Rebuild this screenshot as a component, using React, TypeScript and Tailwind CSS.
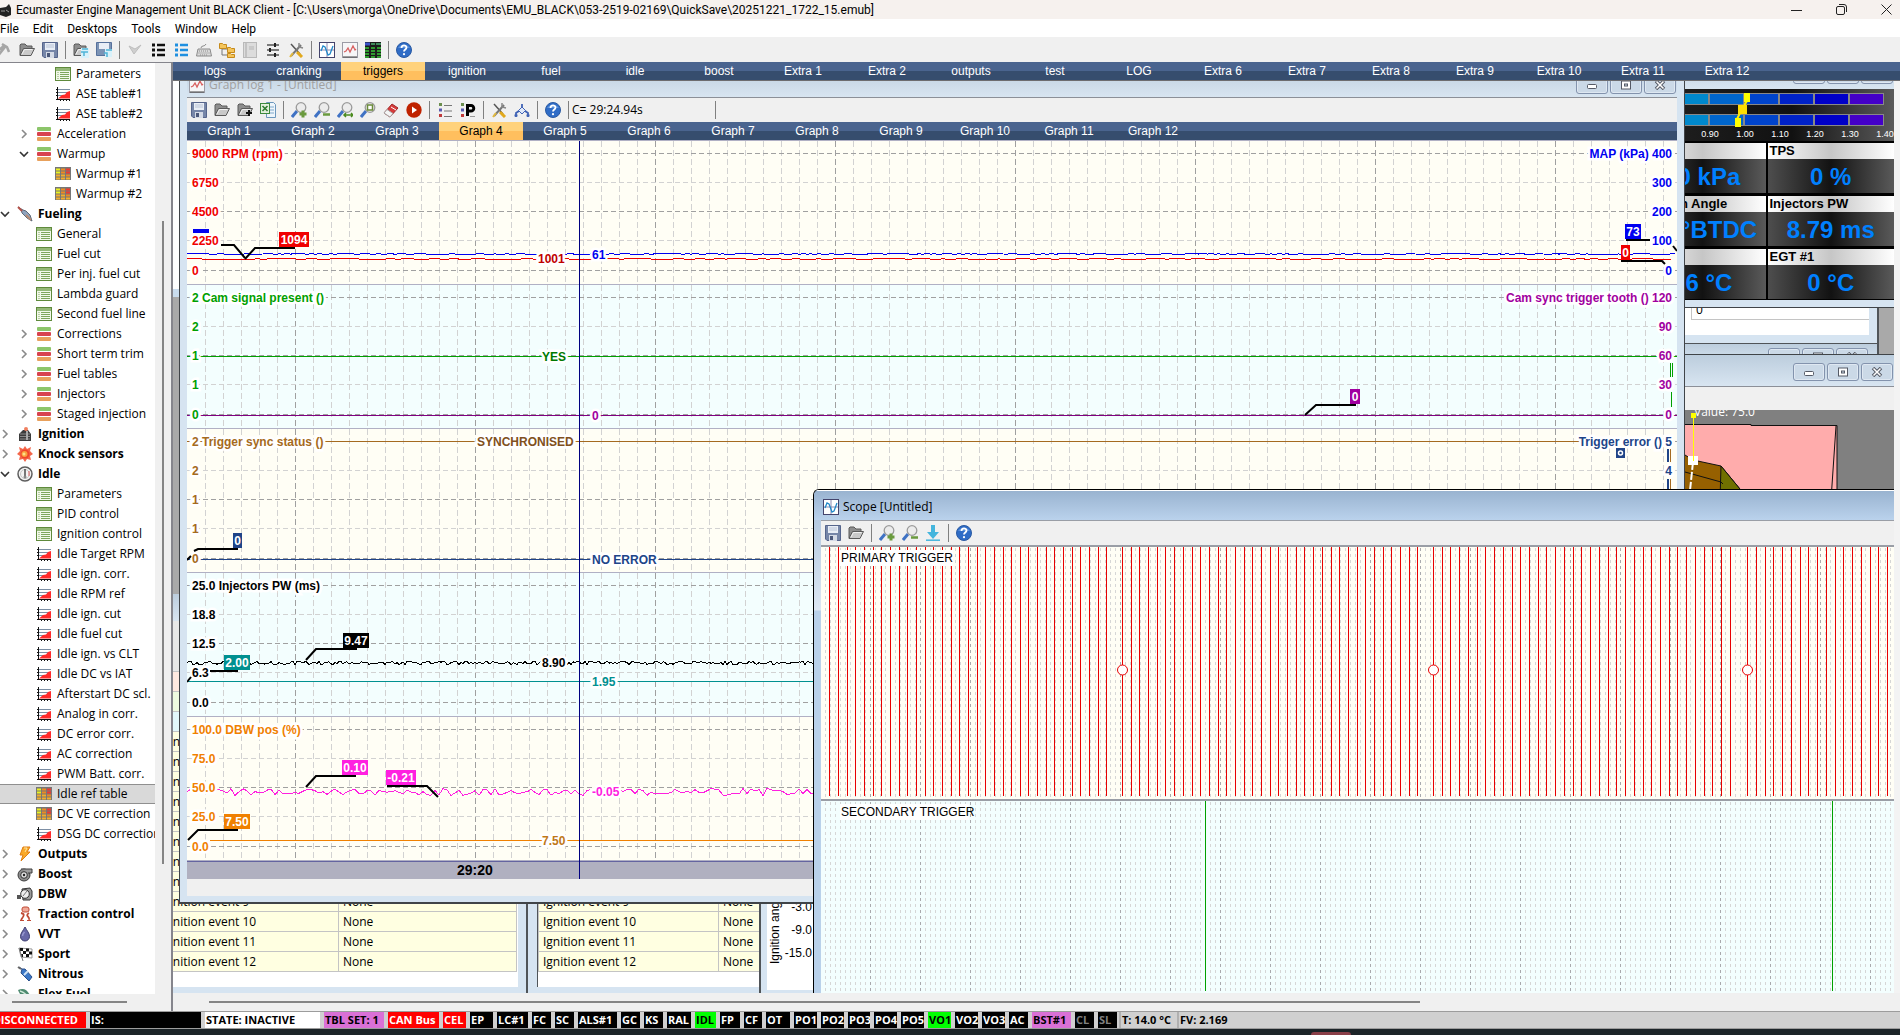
import { useState, type ReactNode } from 'react';

/* ------------------------------------------------------------------ */
/* Icons                                                               */
/* ------------------------------------------------------------------ */

function Svg({ children, size = 16 }: { children: ReactNode; size?: number }) {
  return (
    <svg width={size} height={size} viewBox="0 0 16 16" fill="none" className="shrink-0" aria-hidden="true">
      {children}
    </svg>
  );
}

const SaveIcon = () => (
  <Svg>
    <path d="M0.5 0.5h15v15H2L0.5 14z" fill="#7686a8" stroke="#56658c" />
    <rect x="3" y="1" width="10" height="7" fill="#e9eef6" />
    <path d="M4 3h8M4 5h8" stroke="#b9c3d6" />
    <rect x="4" y="10" width="8" height="6" fill="#d5dbe6" />
    <rect x="5" y="11" width="3" height="4" fill="#4b587a" />
  </Svg>
);

const FolderBase = () => (
  <>
    <path d="M1 13V3l1-1h4l2 2h5v3" fill="#8e8e8e" stroke="#5a5a5a" />
    <path d="M1 13.500L4.500 6.500h11L12 13.500z" fill="#c9c9c9" stroke="#5a5a5a" />
    <path d="M3 12L5.500 7.500h8" stroke="#f1f1f1" />
  </>
);

const OpenIcon = () => (
  <Svg>
    <FolderBase />
  </Svg>
);

const OpenAddIcon = () => (
  <Svg>
    <FolderBase />
    <path d="M12 8v6M9 11h6" stroke="#111" strokeWidth="2" />
  </Svg>
);

const OpenDesktopIcon = () => (
  <Svg>
    <FolderBase />
    <path d="M8 6h8v10H8z" fill="#d8f1fa" />
    <path d="M9 7h6M8 10h3v4M11 10h4" stroke="#4fb4d8" strokeWidth="1.500" />
  </Svg>
);

const SaveDesktopIcon = () => (
  <Svg>
    <path d="M0.500 0.500h15v13H0.500z" fill="#7c93b5" stroke="#56719c" />
    <rect x="3" y="1" width="10" height="6" fill="#e9eef6" />
    <path d="M9 7h7v8H9z" fill="#d8f1fa" />
    <path d="M10 8h6M8 11h3v4" stroke="#4fb4d8" strokeWidth="1.500" />
  </Svg>
);

const WandIcon = () => (
  <Svg>
    <path d="M1 15L9 5M6 2l5 3 2 5M3 8l6-5" stroke="#a6a6a6" strokeWidth="2.500" />
  </Svg>
);

const CheckIcon = () => (
  <Svg>
    <path d="M2 4l5 8 7-9-6 4z" fill="#cfcfcf" stroke="#bdbdbd" />
  </Svg>
);

const BulletsIcon = ({ color }: { color: string }) => (
  <Svg>
    <path d="M2 3h3M2 8h3M2 13h3" stroke={color} strokeWidth="3" />
    <path d="M7 3h8M7 8h8M7 13h8" stroke={color} strokeWidth="2.500" />
  </Svg>
);

const KeyboardIcon = () => (
  <Svg>
    <path d="M5 6c0-3 4-1 5-4" stroke="#888" />
    <path d="M2 7h12l1.500 7h-15z" fill="#dadada" stroke="#8a8a8a" />
    <path d="M3 9h10M2.500 11h11M4 13h8" stroke="#8a8a8a" strokeDasharray="1 1" />
  </Svg>
);

const TreeIcon = () => (
  <Svg>
    <path d="M3 5v8h6M3 7h6" stroke="#777" />
    <path d="M0.500 1.500h3l1 1h3v4h-7zM8.500 5.500h3l1 1h3v4h-7zM8.500 11.500h3l1 1h3v3h-7z" fill="#f5c55a" stroke="#c58a1c" />
  </Svg>
);

const BookIcon = () => (
  <Svg>
    <rect x="1.500" y="0.500" width="13" height="15" fill="#dcdcdc" stroke="#b9b9b9" />
    <path d="M4 1v14" stroke="#c2c2c2" strokeWidth="2" />
    <path d="M7 5h5M7 7h5" stroke="#b5b5b5" />
  </Svg>
);

const SlidersIcon = () => (
  <Svg>
    <path d="M2 3h12M2 8h12M2 13h12" stroke="#555" strokeWidth="1.500" />
    <path d="M10 1v4M5 6v4M10 11v4" stroke="#222" strokeWidth="2" />
  </Svg>
);

const ToolsIcon = () => (
  <Svg>
    <path d="M3 2l9 10" stroke="#555" strokeWidth="1.500" />
    <path d="M9 10l5 5" stroke="#e2a91d" strokeWidth="3" />
    <path d="M13 3L3 14" stroke="#777" strokeWidth="2" />
    <path d="M11 1l0 4 4 1" stroke="#888" strokeWidth="1.500" />
    <path d="M5 11l-3 4" stroke="#e2b93d" strokeWidth="2" />
  </Svg>
);

const ScopeIcon = () => (
  <Svg>
    <rect x="0.500" y="0.500" width="15" height="15" fill="#fff" stroke="#44446c" />
    <path d="M1 8h14M8 1v14" stroke="#8a8ab0" />
    <path d="M2 9l2-5 2 1 3 8 2-1 3-8" stroke="#2389c9" strokeWidth="1.300" />
  </Svg>
);

const LogIcon = () => (
  <Svg>
    <rect x="0.500" y="0.500" width="15" height="15" fill="#f6f6f8" stroke="#9b9ba5" />
    <path d="M2 10l2-1 2-3 2 4 3-6 2 4 1-1" stroke="#d86060" strokeWidth="1.300" />
    <path d="M1 15h14" stroke="#444" />
  </Svg>
);

const TableIcon = () => (
  <Svg>
    <rect width="16" height="16" fill="#1c1c1c" />
    <path d="M0 2h5" stroke="#3b52c9" strokeWidth="3" />
    <path d="M6 2h4M11 2h5" stroke="#3f8a5a" strokeWidth="2" />
    <path d="M0 6h16M0 9h16M0 12h16M0 15h16" stroke="#2f9a2f" strokeWidth="2" strokeDasharray="4 2" />
  </Svg>
);

const HelpIcon = () => (
  <Svg>
    <circle cx="8" cy="8" r="7.500" fill="#2f6cc6" stroke="#2a5aa3" />
    <path d="M2 6a6.500 5 0 0 1 12 0" fill="#5c92dc" />
    <path d="M5.500 6c0-3.500 5-3.200 5-0.500 0 2-2.500 2-2.500 4" stroke="#fff" strokeWidth="1.800" />
    <circle cx="8" cy="12.200" r="1.100" fill="#fff" />
  </Svg>
);

const ExcelIcon = () => (
  <Svg>
    <path d="M6.500 0.500h7l2 2v13h-9z" fill="#eef5fb" stroke="#6b97bd" />
    <path d="M9 5h5M9 8h5M9 11h5" stroke="#7fa9cc" />
    <rect x="0.500" y="1.500" width="9" height="10" fill="#e3f0dd" stroke="#3d8a3d" />
    <path d="M2.500 4l5 5M7.500 4l-5 5" stroke="#2c7a2c" strokeWidth="1.500" />
  </Svg>
);

function ZoomIcon({ kind }: { kind: 'in' | 'out' | 'fit' | 'box' }) {
  return (
    <Svg>
      <path d="M1 15l5-6" stroke="#3f72c4" strokeWidth="3" />
      <circle cx="10" cy="5.500" r="4.800" fill="#ececec" stroke="#9b9b9b" strokeWidth="1.300" />
      {kind === 'in' && <path d="M12 8.500v7M8.500 12h7" stroke="#6a9a3e" strokeWidth="3" />}
      {kind === 'out' && <path d="M9 12.500h7" stroke="#6a9a3e" strokeWidth="2.500" />}
      {kind === 'fit' && <path d="M7 13h9M9 11l-2 2 2 2M14 11l2 2-2 2" stroke="#4a8a1e" strokeWidth="1.500" />}
      {kind === 'box' && <rect x="7.500" y="3" width="5" height="5" fill="#fff" stroke="#6a8a3a" strokeWidth="1.500" />}
    </Svg>
  );
}

const EraserIcon = () => (
  <Svg>
    <path d="M1 11L9 2l6 4-8 9z" fill="#d63c3c" stroke="#a02828" />
    <path d="M1 11l3-3.500 6 4L7 15z" fill="#f4f4f4" stroke="#a9a9a9" />
    <path d="M8 5l5 3" stroke="#fff" />
  </Svg>
);

const PlayIcon = () => (
  <Svg>
    <circle cx="8" cy="8" r="7.700" fill="#bf2200" />
    <path d="M6 4.500l5 3.500-5 3.500z" fill="#fff" />
  </Svg>
);

const ListIcon = () => (
  <Svg>
    <path d="M2 2.500h3" stroke="#6b8e4e" strokeWidth="3" />
    <path d="M2 8h3" stroke="#5a5ab0" strokeWidth="3" />
    <path d="M2 13.500h3" stroke="#c03a3a" strokeWidth="3" />
    <path d="M7 3.500h8M7 9h8M7 14.500h8" stroke="#777" />
  </Svg>
);

const ParamIcon = () => (
  <Svg>
    <path d="M1 2.500h3" stroke="#6b8e4e" strokeWidth="3" />
    <path d="M1 8h3" stroke="#5a5ab0" strokeWidth="3" />
    <path d="M1 13.500h3" stroke="#c03a3a" strokeWidth="3" />
    <path d="M7.500 14V3.500h3.500a2.500 2.500 0 0 1 0 5.500H8" stroke="#000" strokeWidth="3" />
    <path d="M10 14.500h5" stroke="#999" />
  </Svg>
);

const BranchIcon = () => (
  <Svg>
    <path d="M2 15v-4l3-2h6l3 2v4M8 9V2" stroke="#3f62b5" strokeWidth="1.800" />
    <path d="M8 5l3.500 3.500L8 12 4.500 8.500z" fill="#dfe9fa" stroke="#3f62b5" />
    <path d="M0.500 13.500h3M12.500 13.500h3" stroke="#3f62b5" strokeWidth="2" />
  </Svg>
);

const DownloadIcon = () => (
  <Svg>
    <path d="M6 0h4v7h4l-6 7-6-7h4z" fill="#44b5dd" />
    <path d="M1 15.200h14" stroke="#44b5dd" strokeWidth="1.500" />
  </Svg>
);

type NodeIcon =
  | 'form' | 'curve' | 'group' | 'map' | 'fuel' | 'ignition' | 'knock' | 'idle' | 'output'
  | 'boost' | 'dbw' | 'traction' | 'vvt' | 'sport' | 'nitrous' | 'flex';

function TreeGlyph({ kind }: { kind: NodeIcon }) {
  switch (kind) {
    case 'form':
      return (
        <Svg>
          <rect x="0.500" y="1.500" width="15" height="13" fill="#f2f8ea" stroke="#5f8a3c" />
          <path d="M1 3.500h14" stroke="#94b878" strokeWidth="3" />
          <path d="M2.500 6.500h1M2.500 8.500h1M2.500 10.500h1M2.500 12.500h1M5 6.500h9M5 8.500h9M5 10.500h9M5 12.500h9" stroke="#7fa65c" />
        </Svg>
      );
    case 'curve':
      return (
        <Svg>
          <path d="M3 3.500h12M3 6.500h12M3 9.500h12" stroke="#7d8fa5" />
          <path d="M3 12.500L7 9l3-0.500L12 6l3-1v7.500z" fill="#ff2a2a" />
          <path d="M2.500 1v13M1 13.500h14M1 3.500h2M1 6.500h2M1 9.500h2M5.500 13v2M8.500 13v2M11.500 13v2M14.500 13v2" stroke="#111" />
        </Svg>
      );
    case 'group':
      return (
        <Svg>
          <rect x="1" y="1" width="14" height="4" rx="1" fill="#8cc56a" />
          <rect x="1" y="6" width="14" height="4" rx="1" fill="#d8434e" />
          <rect x="1" y="11" width="14" height="4" rx="1" fill="#e8a15c" />
          <path d="M1 5.500h14M1 10.500h14" stroke="#fff" />
        </Svg>
      );
    case 'map':
      return (
        <Svg>
          <rect x="0" y="1" width="16" height="13" fill="#777" />
          <path d="M1 3.500h4M1 6.500h4" stroke="#ecf11f" strokeWidth="2" />
          <path d="M6 3.500h4M6 6.500h4M11 9.500h4" stroke="#f08a20" strokeWidth="2" />
          <path d="M11 3.500h4M11 6.500h4" stroke="#f03a30" strokeWidth="2" />
          <path d="M1 9.500h4M6 9.500h4M1 12.500h4M6 12.500h4M11 12.500h4" stroke="#f4ae2a" strokeWidth="2" />
        </Svg>
      );
    case 'fuel':
      return (
        <Svg>
          <path d="M1 1l3 2 1 4 5 5 5 3-2-6-4-4-3-1z" fill="#8fa3bd" stroke="#5c6877" />
          <path d="M1 1l4 4" stroke="#b5524a" strokeWidth="2" />
          <path d="M9 9l5 5" stroke="#b98c74" strokeWidth="2" />
        </Svg>
      );
    case 'ignition':
      return (
        <Svg>
          <path d="M2 15V8l4-4h5l3 4v7z" fill="#3c3c3c" />
          <path d="M3 8h10M3 10.500h10M3 13h10" stroke="#8a8a8a" />
          <circle cx="9" cy="3" r="2" fill="#f08060" />
          <path d="M10 5v9" stroke="#a8a8a8" strokeWidth="2" />
        </Svg>
      );
    case 'knock':
      return (
        <Svg>
          <path d="M8 0l2 3 4-2-1 4 3 3-3 2 1 4-4-1-2 3-2-3-4 1 1-4-3-2 3-3-1-4 4 2z" fill="#f4664a" />
          <circle cx="8" cy="8" r="4.500" fill="#f0442a" />
          <circle cx="7.500" cy="8" r="3" fill="#f9a03e" />
          <circle cx="7" cy="8" r="1.500" fill="#fde08a" />
        </Svg>
      );
    case 'idle':
      return (
        <Svg>
          <circle cx="8" cy="8" r="7" fill="#f3f3f3" stroke="#5e5e5e" strokeWidth="1.500" />
          <circle cx="8" cy="8" r="4.500" stroke="#c5c5c5" />
          <path d="M8 3v7" stroke="#333" strokeWidth="1.300" />
          <path d="M12 5v5" stroke="#e06060" />
          <circle cx="8" cy="11" r="1.500" fill="#888" />
        </Svg>
      );
    case 'output':
      return (
        <Svg>
          <path d="M6 1h7l-3 5h3L4 15l2-6H3z" fill="#f9a928" stroke="#e07f14" />
          <path d="M7 2h3L8 6" stroke="#fde5a0" />
        </Svg>
      );
    case 'boost':
      return (
        <Svg>
          <circle cx="7" cy="9" r="6" fill="#8c8c8c" stroke="#3c3c3c" />
          <path d="M4 3h11v4h-4" fill="#9d9d9d" stroke="#3c3c3c" />
          <circle cx="7" cy="9" r="3.300" fill="#e0e0e0" stroke="#333" />
          <circle cx="7" cy="9" r="1.200" fill="#222" />
        </Svg>
      );
    case 'dbw':
      return (
        <Svg>
          <path d="M5 3l8-1 2 3v6l-2 3-7 0z" fill="#9a9a9a" stroke="#333" />
          <circle cx="8" cy="8" r="4.300" fill="#eee" stroke="#333" />
          <path d="M6 10l4-5" stroke="#777" />
          <path d="M0 9h4v4H0z" fill="#555" />
        </Svg>
      );
    case 'traction':
      return (
        <Svg>
          <rect x="5" y="1" width="7" height="5" rx="2" fill="#f0a898" stroke="#c04a34" />
          <path d="M4 7c5 1 2 4 0 7M12 7c-5 3 2 4 0 7" stroke="#c04a34" strokeWidth="1.800" />
          <path d="M3 14.500h4M10 14.500h4" stroke="#c04a34" />
        </Svg>
      );
    case 'vvt':
      return (
        <Svg>
          <path d="M8 1c2 4 4.500 6 4.500 9.500a4.500 4.500 0 0 1-9 0C3.500 7 6 5 8 1z" fill="#6868a8" stroke="#3e3e6e" />
          <path d="M5.500 10c0-2 1-3 2-4" stroke="#9a9ad0" strokeWidth="1.500" />
        </Svg>
      );
    case 'sport':
      return (
        <Svg>
          <path d="M2 2l13 1v9L4 11z" fill="#fff" stroke="#999" />
          <path d="M3 2h3v3H3zM9 2.500h3v3H9zM6 5h3v3H6zM12 5.500h3v3h-3zM4 8h2v3H4zM9 8h3v3H9z" fill="#111" />
          <path d="M2 2l4 13" stroke="#777" />
        </Svg>
      );
    case 'nitrous':
      return (
        <Svg>
          <path d="M2 1l3 2M5 3l3 0 7 8-3 4-8-8z" fill="#3a78c8" stroke="#2a4f8a" />
          <path d="M7 9l4-4" stroke="#cfe3f5" strokeWidth="2" />
          <path d="M1 1l3 2" stroke="#666" strokeWidth="2" />
        </Svg>
      );
    default:
      return (
        <Svg>
          <path d="M1 4c6-3 11 0 13 9C8 14 3 10 1 4z" fill="#4e8a70" />
          <path d="M3 5c4 1 7 4 9 8" stroke="#cfe8d8" strokeWidth="1.500" />
        </Svg>
      );
  }
}

/* ------------------------------------------------------------------ */
/* Data                                                                */
/* ------------------------------------------------------------------ */

const MENU = ['File', 'Edit', 'Desktops', 'Tools', 'Window', 'Help'];

const DESKTOPS = [
  'logs', 'cranking', 'triggers', 'ignition', 'fuel', 'idle', 'boost', 'Extra 1', 'Extra 2', 'outputs',
  'test', 'LOG', 'Extra 6', 'Extra 7', 'Extra 8', 'Extra 9', 'Extra 10', 'Extra 11', 'Extra 12',
];

const GRAPHS = Array.from({ length: 12 }, (_, i) => `Graph ${i + 1}`);

type TreeNode = { label: string; level: 0 | 1 | 2; icon: NodeIcon; open?: boolean };

const TREE: TreeNode[] = [
  { label: 'Parameters', level: 2, icon: 'form' },
  { label: 'ASE table#1', level: 2, icon: 'curve' },
  { label: 'ASE table#2', level: 2, icon: 'curve' },
  { label: 'Acceleration', level: 1, icon: 'group', open: false },
  { label: 'Warmup', level: 1, icon: 'group', open: true },
  { label: 'Warmup #1', level: 2, icon: 'map' },
  { label: 'Warmup #2', level: 2, icon: 'map' },
  { label: 'Fueling', level: 0, icon: 'fuel', open: true },
  { label: 'General', level: 1, icon: 'form' },
  { label: 'Fuel cut', level: 1, icon: 'form' },
  { label: 'Per inj. fuel cut', level: 1, icon: 'form' },
  { label: 'Lambda guard', level: 1, icon: 'form' },
  { label: 'Second fuel line', level: 1, icon: 'form' },
  { label: 'Corrections', level: 1, icon: 'group', open: false },
  { label: 'Short term trim', level: 1, icon: 'group', open: false },
  { label: 'Fuel tables', level: 1, icon: 'group', open: false },
  { label: 'Injectors', level: 1, icon: 'group', open: false },
  { label: 'Staged injection', level: 1, icon: 'group', open: false },
  { label: 'Ignition', level: 0, icon: 'ignition', open: false },
  { label: 'Knock sensors', level: 0, icon: 'knock', open: false },
  { label: 'Idle', level: 0, icon: 'idle', open: true },
  { label: 'Parameters', level: 1, icon: 'form' },
  { label: 'PID control', level: 1, icon: 'form' },
  { label: 'Ignition control', level: 1, icon: 'form' },
  { label: 'Idle Target RPM', level: 1, icon: 'curve' },
  { label: 'Idle ign. corr.', level: 1, icon: 'curve' },
  { label: 'Idle RPM ref', level: 1, icon: 'curve' },
  { label: 'Idle ign. cut', level: 1, icon: 'curve' },
  { label: 'Idle fuel cut', level: 1, icon: 'curve' },
  { label: 'Idle ign. vs CLT', level: 1, icon: 'curve' },
  { label: 'Idle DC vs IAT', level: 1, icon: 'curve' },
  { label: 'Afterstart DC scl.', level: 1, icon: 'curve' },
  { label: 'Analog in corr.', level: 1, icon: 'curve' },
  { label: 'DC error corr.', level: 1, icon: 'curve' },
  { label: 'AC correction', level: 1, icon: 'curve' },
  { label: 'PWM Batt. corr.', level: 1, icon: 'curve' },
  { label: 'Idle ref table', level: 1, icon: 'map' },
  { label: 'DC VE correction', level: 1, icon: 'map' },
  { label: 'DSG DC correction', level: 1, icon: 'curve' },
  { label: 'Outputs', level: 0, icon: 'output', open: false },
  { label: 'Boost', level: 0, icon: 'boost', open: false },
  { label: 'DBW', level: 0, icon: 'dbw', open: false },
  { label: 'Traction control', level: 0, icon: 'traction', open: false },
  { label: 'VVT', level: 0, icon: 'vvt', open: false },
  { label: 'Sport', level: 0, icon: 'sport', open: false },
  { label: 'Nitrous', level: 0, icon: 'nitrous', open: false },
  { label: 'Flex Fuel', level: 0, icon: 'flex', open: false },
];

const RED = 'bg-[#ff0000] text-white';
const BLACK = 'bg-black text-white';
const GREEN = 'bg-[#00ff00] text-black';
const PINK = 'bg-[#da70d6] text-black';
const DIM = 'bg-black text-[#808080]';
const PLAIN = 'bg-[#d0d0d0] text-black shadow-[-2px_0_0_#b0b0b0]';

const STATUS: [string, string, string][] = [
  ['IS:', 'w-[111px]', BLACK],
  ['STATE: INACTIVE', 'w-[115px]', 'bg-white text-black'],
  ['TBL SET: 1', 'w-[60px]', PINK],
  ['CAN Bus', 'w-[51px]', RED],
  ['CEL', 'w-[23px]', RED],
  ['EP', 'w-[23px]', BLACK],
  ['LC#1', 'w-[31px]', BLACK],
  ['FC', 'w-[19px]', BLACK],
  ['SC', 'w-[19px]', BLACK],
  ['ALS#1', 'w-[39px]', BLACK],
  ['GC', 'w-[19px]', BLACK],
  ['KS', 'w-[19px]', BLACK],
  ['RAL', 'w-[24px]', BLACK],
  ['IDL', 'w-[21px]', GREEN],
  ['FP', 'w-[20px]', BLACK],
  ['CF', 'w-[18px]', BLACK],
  ['OT', 'w-[24px]', BLACK],
  ['PO1', 'w-[23px]', BLACK],
  ['PO2', 'w-[23px]', BLACK],
  ['PO3', 'w-[22px]', BLACK],
  ['PO4', 'w-[23px]', BLACK],
  ['PO5', 'w-[23px]', BLACK],
  ['VO1', 'w-[23px]', GREEN],
  ['VO2', 'w-[23px]', BLACK],
  ['VO3', 'w-[23px]', BLACK],
  ['AC', 'w-[19px]', BLACK],
  ['BST#1', 'w-[39px]', PINK],
  ['CL', 'w-[19px]', DIM],
  ['SL', 'w-[19px]', DIM],
  ['T: 14.0 °C', 'w-[54px]', PLAIN],
  ['FV: 2.169', 'w-[55px]', PLAIN],
];

/* ------------------------------------------------------------------ */
/* Shared pieces                                                       */
/* ------------------------------------------------------------------ */

function ToolButton({ label, children }: { label: string; children: ReactNode }) {
  return (
    <button type="button" aria-label={label} className="flex h-[22px] w-[23px] shrink-0 items-center justify-center">
      {children}
    </button>
  );
}

const Separator = () => (
  <span className="flex w-2 shrink-0 justify-center">
    <span className="h-[18px] w-px bg-[#808080]" />
  </span>
);

function TabStrip({ tabs, initial }: { tabs: string[]; initial: string }) {
  const [active, setActive] = useState(initial);
  return (
    <div role="tablist" className="flex h-[18px] shrink-0 overflow-hidden bg-[linear-gradient(#4a648f_50%,#364d6e_50%)]">
      {tabs.map((t) => (
        <button
          key={t}
          type="button"
          role="tab"
          aria-selected={t === active}
          onClick={() => setActive(t)}
          className={`w-[84px] shrink-0 font-['Liberation_Sans',sans-serif] text-[12px] leading-[17px] ${
            t === active ? 'bg-[linear-gradient(#ffd27c_50%,#ffbf5e_50%)] text-black' : 'text-white'
          }`}
        >
          {t}
        </button>
      ))}
    </div>
  );
}

function WindowButtons() {
  const frame =
    'flex h-[18px] w-8 items-center justify-center rounded-[3px] border border-[#8393ad] bg-[#cbd9e7] shadow-[inset_0_0_0_1px_#dfe8f2]';
  return (
    <div className="flex gap-[2px] pr-px">
      <button type="button" aria-label="Minimize" className={frame}>
        <svg width="12" height="10" viewBox="0 0 12 10"><rect x="1.500" y="4.500" width="9" height="4" rx="1" fill="#fff" stroke="#555a66" /></svg>
      </button>
      <button type="button" aria-label="Maximize" className={frame}>
        <svg width="12" height="10" viewBox="0 0 12 10"><rect x="1.500" y="1" width="9" height="8" fill="#fff" stroke="#555a66" /><rect x="4.500" y="4" width="3" height="2" fill="#cbd9e7" stroke="#555a66" /></svg>
      </button>
      <button type="button" aria-label="Close" className={frame}>
        <svg width="12" height="10" viewBox="0 0 12 10"><path d="M2 1l8 8M10 1l-8 8" stroke="#555a66" strokeWidth="3.500" /><path d="M2.500 1.500l7 7M9.500 1.500l-7 7" stroke="#fff" strokeWidth="1.500" /></svg>
      </button>
    </div>
  );
}

/* ------------------------------------------------------------------ */
/* Parameter tree                                                      */
/* ------------------------------------------------------------------ */

function Chevron({ open }: { open?: boolean }) {
  if (open === undefined) return <span className="w-[10px] shrink-0" />;
  return (
    <svg width="10" height="10" viewBox="0 0 10 10" fill="none" className="shrink-0">
      {open ? <path d="M1 3l4 4 4-4" stroke="#333" strokeWidth="1.600" /> : <path d="M3 1l4 4-4 4" stroke="#8a8a8a" strokeWidth="1.600" />}
    </svg>
  );
}

function ParameterTree() {
  const [selected, setSelected] = useState(36);
  const indent = ['pl-0', 'pl-[19px]', 'pl-[38px]'];
  return (
    <aside className="flex w-[173px] shrink-0 flex-col border-t border-r-2 border-[#85858c] bg-[#f0f0f0]">
      <div className="flex min-h-0 flex-1">
        <ul className="w-[155px] overflow-hidden bg-white pt-px">
          {TREE.map((n, i) => (
            <li key={i}>
              <button
                type="button"
                onClick={() => setSelected(i)}
                className={`flex h-5 w-full items-center border-y text-left whitespace-nowrap ${indent[n.level]} ${
                  i === selected ? 'border-[#8f8f8f] bg-[#d9d9d9]' : 'border-transparent'
                }`}
              >
                <Chevron open={n.open} />
                <span className="mr-1 ml-[7px]">
                  <TreeGlyph kind={n.icon} />
                </span>
                <span className={`pl-px text-[12px] leading-[18px] ${n.level === 0 ? 'font-bold' : ''}`}>{n.label}</span>
              </button>
            </li>
          ))}
        </ul>
        <div className="flex-1 pt-[158px] pl-[7px]">
          <div className="h-[643px] w-[2px] bg-[#858585]" />
        </div>
      </div>
      <div className="h-[17px] pt-[7px] pl-3">
        <div className="h-[2px] w-[115px] bg-[#858585]" />
      </div>
    </aside>
  );
}

/* ------------------------------------------------------------------ */
/* Graph log                                                           */
/* ------------------------------------------------------------------ */

const CHART_W = 1490;
const PANEL_H = 144;
const ROWS = [12, 41, 70, 99, 129];

type Scale = { color: string; title: string; ticks: string[] };

const PANELS: { left: Scale; right?: Scale }[] = [
  {
    left: { color: '#f00000', title: 'RPM (rpm)', ticks: ['9000', '6750', '4500', '2250', '0'] },
    right: { color: '#0000f0', title: 'MAP (kPa)', ticks: ['400', '300', '200', '100', '0'] },
  },
  {
    left: { color: '#00a000', title: 'Cam signal present ()', ticks: ['2', '2', '1', '1', '0'] },
    right: { color: '#a000a0', title: 'Cam sync trigger tooth ()', ticks: ['120', '90', '60', '30', '0'] },
  },
  {
    left: { color: '#a56a20', title: 'Trigger sync status ()', ticks: ['2', '2', '1', '1', '0'] },
    right: { color: '#204488', title: 'Trigger error ()', ticks: ['5', '4'] },
  },
  { left: { color: '#000000', title: 'Injectors PW (ms)', ticks: ['25.0', '18.8', '12.5', '6.3', '0.0'] } },
  { left: { color: '#f08000', title: 'DBW pos (%)', ticks: ['100.0', '75.0', '50.0', '25.0', '0.0'] } },
];

// repeatable jitter, so a trace keeps its shape between renders
function trace(y: number, amp: number, step: number, seed: number) {
  let s = seed;
  let d = `M0 ${y}`;
  for (let x = step; x <= CHART_W; x += step) {
    s = (s * 16807) % 2147483647;
    d += `L${x} ${(y + ((s / 2147483647) * 2 - 1) * amp).toFixed(1)}`;
  }
  return d;
}

function Label({ x, y, color, children, end }: { x: number; y: number; color: string; children: ReactNode; end?: boolean }) {
  return (
    <text
      x={x}
      y={y}
      fill={color}
      stroke="#fff"
      strokeWidth="5"
      paintOrder="stroke"
      textAnchor={end ? 'end' : 'start'}
    >
      {children}
    </text>
  );
}

function Flag({ x, y, w, color, value, line }: { x: number; y: number; w: number; color: string; value: string; line: string }) {
  return (
    <g>
      <rect x={x} y={y} width={w} height={15} fill={color} />
      <text x={x + w / 2} y={y + 12} fill="#fff" textAnchor="middle">{value}</text>
      <polyline points={line} fill="none" stroke="#000" strokeWidth="2" />
    </g>
  );
}

function GraphChart() {
  const verticals = Array.from({ length: 83 }, (_, i) => ({ x: 18.5 + i * 18, major: i % 10 === 5 }));
  return (
    <svg width="100%" height="738" className="block font-['Liberation_Sans',sans-serif] text-[12px] font-bold">
      {PANELS.map((p, i) => (
        <g key={i} transform={`translate(0 ${i * PANEL_H})`}>
          <rect width="100%" height={PANEL_H} fill={i % 2 ? '#f3fefe' : '#fffef5'} />
          <g shapeRendering="crispEdges">
            {verticals.map((v) => (
              <path key={v.x} d={`M${v.x} 0v143`} stroke={v.major ? '#a0a0a0' : '#d2d2d2'} strokeDasharray="6 3" />
            ))}
            {ROWS.map((y, r) => (
              <path key={y} d={`M0 ${y + 0.5}h${CHART_W}`} stroke={r % 2 ? '#d2d2d2' : '#a0a0a0'} strokeDasharray="5 3" />
            ))}
            <path d={`M0 ${PANEL_H - 0.5}h${CHART_W}`} stroke="#b0b0c4" />
          </g>
        </g>
      ))}

      {/* signals */}
      <g fill="none" shapeRendering="crispEdges">
        <path d={trace(113, 0.7, 4, 77)} stroke="#0000f0" />
        <path d={`${trace(118, 0.7, 7, 41)}`} stroke="#f00000" />
        <path d={`M0 215.500h${CHART_W}`} stroke="#00a000" />
        <path d={`M0 274.500h${CHART_W}`} stroke="#800080" />
        <path d="M1483.500 222v14M1485.500 222v14M1484.500 251v15" stroke="#00a000" />
        <path d={`M0 300.500h1450`} stroke="#a56a20" />
        <path d={`M0 418.500h${CHART_W}`} stroke="#204488" />
        <path d="M1480.500 308v13M1480.500 338v20" stroke="#204488" strokeWidth="2" />
        <path d="M1483.500 308v13M1483.500 338v20" stroke="#a56a20" />
        <path d={trace(522, 1.9, 2, 913)} stroke="#000" />
        <path d={`M0 540.500h${CHART_W}`} stroke="#009090" />
        <path d={trace(651, 3.5, 4, 5150)} stroke="#ff20e0" />
        <path d={`M23 699.500h${CHART_W}`} stroke="#f08000" />
      </g>

      {/* scales */}
      {PANELS.map((p, i) => (
        <g key={i} transform={`translate(0 ${i * PANEL_H})`}>
          {p.left.ticks.map((t, r) => (
            <Label key={r} x={5} y={ROWS[r] + 5} color={p.left.color}>
              {r === 0 ? `${t} ${p.left.title}` : t}
            </Label>
          ))}
          {p.right?.ticks.map((t, r) => (
            <Label key={r} x={1485} y={ROWS[r] + 5} color={p.right!.color} end>
              {r === 0 ? `${p.right!.title} ${t}` : t}
            </Label>
          ))}
        </g>
      ))}

      {/* min / max flags */}
      <rect x="6" y="88" width="16" height="4" fill="#0000f0" />
      <Flag x={92} y={91} w={30} color="#f00000" value="1094" line="58,118 68,107 108,107" />
      <polyline points="34,104 47,104 58,117" fill="none" stroke="#000" strokeWidth="2" />
      <Flag x={1438} y={83} w={16} color="#0000f0" value="73" line="1439,99 1463,99" />
      <polyline points="1486,105 1490,110" fill="none" stroke="#000" strokeWidth="2" />
      <Flag x={1434} y={104} w={9} color="#f00000" value="0" line="1434,120 1475,120 1478,123" />
      <Flag x={1163} y={248} w={10} color="#a000a0" value="0" line="1118,274 1129,264 1169,264" />
      <Flag x={46} y={392} w={9} color="#204488" value="0" line="0,419 4,415" />
      <polyline points="7,410 11,408 51,408" fill="none" stroke="#000" strokeWidth="2" />
      <rect x="1429" y="307" width="9" height="10" fill="#204488" />
      <circle cx="1433.500" cy="312" r="2" fill="none" stroke="#fff" strokeWidth="1.500" />
      <Flag x={156} y={492} w={26} color="#000" value="9.47" line="119,519 129,508 170,508" />
      <Flag x={37} y={514} w={26} color="#009090" value="2.00" line="23,530 51,530" />
      <polyline points="0,541 4,536" fill="none" stroke="#000" strokeWidth="2" />
      <Flag x={155} y={619} w={26} color="#ff20e0" value="0.10" line="119,646 129,635 169,635" />
      <Flag x={199} y={629} w={30} color="#ff20e0" value="-0.21" line="200,645 240,645 251,656" />
      <Flag x={37} y={673} w={26} color="#f08000" value="7.50" line="1,699 11,689 51,689" />

      {/* values under the cursor */}
      <Label x={351} y={122} color="#c00000">1001</Label>
      <Label x={405} y={118} color="#0000f0">61</Label>
      <Label x={355} y={220} color="#007800">YES</Label>
      <Label x={405} y={279} color="#a000a0">0</Label>
      <Label x={290} y={305} color="#805020">SYNCHRONISED</Label>
      <Label x={405} y={423} color="#204488">NO ERROR</Label>
      <Label x={355} y={526} color="#000">8.90</Label>
      <Label x={405} y={545} color="#009090">1.95</Label>
      <Label x={405} y={655} color="#ff20e0">-0.05</Label>
      <Label x={355} y={704} color="#c07818">7.50</Label>

      {/* time axis */}
      <rect y="720" width="100%" height="18" fill="#b0b0c0" />
      <rect y="720" width="100%" height="1" fill="#6464a0" />
      <text x="270" y="734" fontSize="14" fill="#000">29:20</text>
      <path d="M392.500 0v738" stroke="#000080" shapeRendering="crispEdges" />
    </svg>
  );
}

function GraphWindow() {
  return (
    <section className="absolute top-[-16px] right-[209px] left-[6px] flex flex-col border-r border-b-2 border-l border-[#404448] bg-[#d6e4f1] px-[7px] pb-[6px]">
      <header className="flex h-8 items-center justify-between bg-[linear-gradient(#bccddd,#d8e5f1)] pt-2 pl-[2px]">
        <h2 className="flex items-center gap-1 text-[12px] text-[#a0a0a0]">
          <LogIcon />
          Graph log 1 - [Untitled]
        </h2>
        <WindowButtons />
      </header>
      <div className="flex h-[25px] items-center border-t border-[#8c9098] bg-[#f0f0f0]">
        <ToolButton label="Save"><SaveIcon /></ToolButton>
        <ToolButton label="Open"><OpenIcon /></ToolButton>
        <ToolButton label="Add log"><OpenAddIcon /></ToolButton>
        <ToolButton label="Export"><ExcelIcon /></ToolButton>
        <Separator />
        <ToolButton label="Zoom in"><ZoomIcon kind="in" /></ToolButton>
        <ToolButton label="Zoom out"><ZoomIcon kind="out" /></ToolButton>
        <ToolButton label="Fit width"><ZoomIcon kind="fit" /></ToolButton>
        <ToolButton label="Zoom to selection"><ZoomIcon kind="box" /></ToolButton>
        <ToolButton label="Clear"><EraserIcon /></ToolButton>
        <ToolButton label="Record"><PlayIcon /></ToolButton>
        <Separator />
        <ToolButton label="Channels"><ListIcon /></ToolButton>
        <ToolButton label="Parameters"><ParamIcon /></ToolButton>
        <Separator />
        <ToolButton label="Settings"><ToolsIcon /></ToolButton>
        <ToolButton label="Nodes"><BranchIcon /></ToolButton>
        <Separator />
        <ToolButton label="Help"><HelpIcon /></ToolButton>
        <Separator />
        <span className="w-[139px] text-[12px]">C= 29:24.94s</span>
        <Separator />
      </div>
      <TabStrip tabs={GRAPHS} initial="Graph 4" />
      <div className="border-t border-[#b0b0c4] bg-[#f0f0f0] pb-[17px]">
        <GraphChart />
      </div>
    </section>
  );
}

/* ------------------------------------------------------------------ */
/* Scope                                                               */
/* ------------------------------------------------------------------ */

// one crank turn: 35 teeth and a gap
const TURNS = [
  { start: 8.3, pitch: 8.66, teeth: 33 },
  { start: 301, pitch: 8.69, teeth: 35, marker: true },
  { start: 612, pitch: 8.73, teeth: 35, marker: true },
  { start: 926, pitch: 8.75, teeth: 17, marker: true },
];

function ScopeGrid({ height }: { height: number }) {
  return (
    <>
      {Array.from({ length: 214 }, (_, i) => (
        <path
          key={i}
          d={`M${4.5 + i * 5} 1v${height - 2}`}
          stroke={i % 10 === 9 ? '#a9a9ad' : '#d6d6d6'}
          strokeDasharray="3 3"
        />
      ))}
    </>
  );
}

function ScopeTrace({ title, children, height, fill }: { title: string; children: ReactNode; height: number; fill: string }) {
  return (
    <svg width="100%" height={height} className="block shrink-0 font-['Liberation_Sans',sans-serif] text-[12px]">
      <rect width="100%" height={height} fill={fill} />
      <g shapeRendering="crispEdges">
        <ScopeGrid height={height} />
        {children}
      </g>
      <rect x="19" y="3" width={title.length * 8 - 7} height="16" fill="#fff" />
      <text x="20" y="15" fill="#000">{title}</text>
    </svg>
  );
}

function ScopeWindow() {
  return (
    <section className="absolute top-[408px] right-0 bottom-0 left-[640px] flex flex-col overflow-hidden rounded-tl-[6px] border-t border-l border-black bg-[linear-gradient(#a8c0da,#dde7f3_120px,#b9d1ea_121px)] pl-[7px]">
      <header className="-ml-[7px] flex h-[30px] shrink-0 items-center bg-[linear-gradient(#98b2cf,#bad2ec)] pt-1 pl-[9px] shadow-[inset_0_1px_0_#fff]">
        <h2 className="flex items-center gap-1 text-[12px]">
          <ScopeIcon />
          Scope [Untitled]
        </h2>
      </header>
      <div className="flex h-[27px] shrink-0 items-center border-t border-b-2 border-[#9a9ea6] bg-[#f0f0f0]">
        <ToolButton label="Save"><SaveIcon /></ToolButton>
        <ToolButton label="Open"><OpenIcon /></ToolButton>
        <Separator />
        <ToolButton label="Zoom in"><ZoomIcon kind="in" /></ToolButton>
        <ToolButton label="Zoom out"><ZoomIcon kind="out" /></ToolButton>
        <ToolButton label="Download"><DownloadIcon /></ToolButton>
        <Separator />
        <ToolButton label="Help"><HelpIcon /></ToolButton>
      </div>
      <ScopeTrace title="PRIMARY TRIGGER" height={252} fill="#fffef5">
        {TURNS.map((t) =>
          Array.from({ length: t.teeth }, (_, k) => (
            <path key={`${t.start}-${k}`} d={`M${Math.round(t.start + k * t.pitch) + 0.5} 0v249`} stroke="#e80000" />
          )),
        )}
        {TURNS.filter((t) => t.marker).map((t) => (
          <circle key={t.start} cx={t.start + 0.5} cy="123" r="5" fill="#fff" stroke="#e80000" shapeRendering="auto" />
        ))}
      </ScopeTrace>
      <div className="h-[2px] shrink-0 bg-[#9a9ea6]" />
      <ScopeTrace title="SECONDARY TRIGGER" height={192} fill="#f3fefe">
        <path d="M384.500 0v190M1011.500 0v190" stroke="#00a000" />
      </ScopeTrace>
    </section>
  );
}

/* ------------------------------------------------------------------ */
/* Windows lying behind                                                */
/* ------------------------------------------------------------------ */

function EventRows() {
  return (
    <table className="w-[359px] table-fixed border-collapse text-[12px]">
      <tbody>
        {['bg-[#ffe9e0]', 'bg-[#eefbe0]', 'bg-[#e2f8fb]'].map((c) => (
          <tr key={c} className={`h-5 border border-[#c4c4c4] ${c}`}>
            <td className="w-[180px]" />
            <td />
          </tr>
        ))}
        {Array.from({ length: 12 }, (_, i) => (
          <tr key={i} className="h-5 bg-[#ffffe1]">
            <td className="border border-[#c4c4c4] py-0 pl-1 leading-[18px]">Ignition event {i + 1}</td>
            <td className="border border-[#c4c4c4] py-0 pl-1 leading-[18px]">None</td>
          </tr>
        ))}
      </tbody>
    </table>
  );
}

function EventWindows() {
  return (
    <>
      <section className="absolute bottom-0 left-[-15px] flex w-[370px] flex-col border-r-2 border-[#505458] bg-[#d6e4f1] pr-2 pb-[6px]">
        <div className="h-[27px] bg-[linear-gradient(#bccddd,#d8e5f1)]" />
        <div className="h-[50px] bg-[#e8e8e8]" />
        <div className="h-[316px] bg-white">
          <EventRows />
        </div>
      </section>
      <section className="absolute bottom-0 left-[355px] flex w-[233px] flex-col border-r-2 border-[#505458] bg-[#d6e4f1] pb-[6px] pl-[9px]">
        <div className="h-[316px] overflow-hidden border-l border-[#505458] bg-white">
          <EventRows />
        </div>
      </section>
      <section className="absolute bottom-0 left-[588px] h-[110px] w-[60px] bg-[#d6e4f1] pl-[6px]">
        <svg width="54" height="107" className="bg-white font-['Liberation_Sans',sans-serif] text-[12px]">
          <text transform="translate(12 81) rotate(-90)">Ignition angle</text>
          <g textAnchor="end">
            <text x="45" y="28">-3.0</text>
            <text x="45" y="51">-9.0</text>
            <text x="45" y="74">-15.0</text>
          </g>
        </svg>
      </section>
    </>
  );
}

const GAUGES = [
  ['MAP', '60 kPa'],
  ['TPS', '0 %'],
  ['Ignition Angle', '13 °BTDC'],
  ['Injectors PW', '8.79 ms'],
  ['CLT', '26 °C'],
  ['EGT #1', '0 °C'],
];

const BAR_COLORS = ['#0088cc', '#0088cc', '#0066cc', '#0044cc', '#0022c8', '#0000c8', '#4400c8'];

function GaugeWindow() {
  return (
    <section className="absolute top-[-21px] right-0 w-[255px] border-b border-[#404448] bg-[#d6e4f1] pb-[7px]">
      <header className="flex h-[29px] items-center justify-end bg-[linear-gradient(#bccddd,#d8e5f1)]">
        <WindowButtons />
      </header>
      <svg width="255" height="52" className="block bg-[linear-gradient(90deg,#222,#111_60%,#5a5a5a)] font-['Liberation_Sans',sans-serif] text-[9px]">
        {BAR_COLORS.map((c, i) => (
          <g key={i} fill={c} stroke="#888">
            <rect x={i * 35 + 0.5} y="4.500" width="34" height="11" />
            <rect x={i * 35 + 0.5} y="25.500" width="34" height="11" />
          </g>
        ))}
        <path d="M108 12l-5 8-6 12" fill="none" stroke="#ffee00" strokeWidth="2" />
        <path d="M105 4h6v9h-6zM96 29h6v9h-6z" fill="#ffff00" />
        <rect x="99" y="16" width="9" height="9" fill="#ffdd00" />
        <g fill="#fff" textAnchor="middle">
          {['0.90', '1.00', '1.10', '1.20', '1.30', '1.40'].map((v, i) => (
            <text key={v} x={71 + i * 35} y="48">{v}</text>
          ))}
        </g>
      </svg>
      <div className="grid grid-cols-2 gap-x-[2px] bg-black font-['Liberation_Sans',sans-serif] font-bold">
        {GAUGES.map(([name, value]) => (
          <div key={name} className="border-t-2 border-b border-black">
            <div className="h-4 bg-[linear-gradient(90deg,#fff,#c6c6c6_50%,#fff)] pl-[2px] text-[13px] leading-4">{name}</div>
            <div className="h-[34px] bg-[linear-gradient(90deg,#4e4e4e,#121212_50%,#5a5a5a)] text-center text-[24px] leading-[35px] whitespace-nowrap text-[#0080ff]">
              {value}
            </div>
          </div>
        ))}
      </div>
    </section>
  );
}

function MapWindow() {
  return (
    <>
      <section className="absolute top-[220px] right-[15px] h-[43px] w-[240px] border-r-2 border-b border-[#505458] bg-[#d6e4f1] pr-2 pb-2">
        <div className="h-full bg-white pl-[52px]">
          <div className="h-[19px] border-b border-l border-[#c4c4c4] pl-1 text-[12px] leading-[18px]">0</div>
        </div>
      </section>
      <section className="absolute top-[263px] right-[15px] h-[20px] w-[240px] border-r-2 border-[#505458] bg-[linear-gradient(#bccddd,#d8e5f1)]">
        <div className="flex justify-end pt-1 pr-2">
          <WindowButtons />
        </div>
      </section>
      <section className="absolute top-[273px] right-0 w-[254px] border-t border-[#404448] bg-[#d6e4f1]">
        <header className="flex h-[31px] items-center justify-end bg-[linear-gradient(#bccddd,#d8e5f1)] pt-[6px] pb-1">
          <WindowButtons />
        </header>
        <div className="h-6 border-t border-[#8c9098] bg-[#f0f0f0]" />
        <svg width="254" height="90" className="block bg-[#808080] font-['Open_Sans',sans-serif] text-[12px]">
          <text x="54" y="6" fill="#fff">Value: 75.0</text>
          <path d="M0 14.500h111v1h86V90H0z" fill="#ffacac" stroke="#111" />
          <path d="M196 16l-5 74" stroke="#111" />
          <path d="M0 30l45 15 8 5 28 6 28 34H0z" fill="#966000" stroke="#111" />
          <path d="M81 56l28 34H80z" fill="#707000" stroke="#111" />
          <path d="M45 62l36 10 2 2" fill="none" stroke="#111" />
          <path d="M53 52l-4 38" stroke="#fff" strokeWidth="2" strokeDasharray="8 2" />
          <rect x="48" y="46" width="10" height="9" fill="#fff" />
          <path d="M53.500 6v45" stroke="#ffff00" />
          <rect x="51" y="3" width="5" height="5" fill="#ffff00" />
        </svg>
      </section>
    </>
  );
}

/* ------------------------------------------------------------------ */
/* Shell                                                               */
/* ------------------------------------------------------------------ */

export default function App() {
  return (
    <div className="flex h-screen flex-col overflow-hidden bg-[#f0f0f0] font-['Open_Sans','Noto_Sans',sans-serif] text-[12px] text-black">
      <header className="flex h-[19px] shrink-0 items-center justify-between bg-[#f6f1ee]">
        <h1 className="flex items-center gap-1 font-['Roboto',sans-serif] text-[12px] whitespace-nowrap">
          <svg width="12" height="14" viewBox="0 0 12 14">
            <path d="M0 5l6-1 3-3 2 4v7l-5 2-6-2z" fill="#222" />
            <path d="M1 8h4M6 7l3 2" stroke="#999" />
          </svg>
          Ecumaster Engine Management Unit BLACK Client - [C:\Users\morga\OneDrive\Documents\EMU_BLACK\053-2519-02169\QuickSave\20251221_1722_15.emub]
        </h1>
        <div className="flex items-center gap-[34px] pr-2">
          <button type="button" aria-label="Minimize">
            <svg width="11" height="11" viewBox="0 0 11 11" fill="none"><path d="M0 6.500h11" stroke="#222" /></svg>
          </button>
          <button type="button" aria-label="Restore">
            <svg width="11" height="11" viewBox="0 0 11 11" fill="none"><rect x="0.500" y="2.500" width="8" height="8" rx="1.500" stroke="#222" /><path d="M3 0.500h5a2.500 2.500 0 0 1 2.500 2.500v5" stroke="#222" /></svg>
          </button>
          <button type="button" aria-label="Close">
            <svg width="11" height="11" viewBox="0 0 11 11" fill="none"><path d="M0.500 0.500l10 10M10.500 0.500l-10 10" stroke="#222" /></svg>
          </button>
        </div>
      </header>

      <nav className="flex h-[18px] shrink-0 items-end gap-[14px] bg-white">
        {MENU.map((m) => (
          <button key={m} type="button" className="font-['Roboto',sans-serif] text-[12px] leading-4">{m}</button>
        ))}
      </nav>

      <div className="-ml-2 flex h-[25px] shrink-0 items-center">
        <ToolButton label="Connect"><WandIcon /></ToolButton>
        <ToolButton label="Open"><OpenIcon /></ToolButton>
        <ToolButton label="Save"><SaveIcon /></ToolButton>
        <Separator />
        <ToolButton label="Open desktop"><OpenDesktopIcon /></ToolButton>
        <ToolButton label="Save desktop"><SaveDesktopIcon /></ToolButton>
        <Separator />
        <ToolButton label="Make permanent"><CheckIcon /></ToolButton>
        <ToolButton label="Parameters"><BulletsIcon color="#111" /></ToolButton>
        <ToolButton label="Log channels"><BulletsIcon color="#1e8fe0" /></ToolButton>
        <ToolButton label="Keyboard"><KeyboardIcon /></ToolButton>
        <ToolButton label="Tree"><TreeIcon /></ToolButton>
        <ToolButton label="Notes"><BookIcon /></ToolButton>
        <ToolButton label="Options"><SlidersIcon /></ToolButton>
        <ToolButton label="Tools"><ToolsIcon /></ToolButton>
        <Separator />
        <ToolButton label="Scope"><ScopeIcon /></ToolButton>
        <ToolButton label="Graph log"><LogIcon /></ToolButton>
        <ToolButton label="Table"><TableIcon /></ToolButton>
        <Separator />
        <ToolButton label="Help"><HelpIcon /></ToolButton>
      </div>

      <div className="flex min-h-0 flex-1">
        <ParameterTree />
        <main className="flex min-w-0 flex-1 flex-col">
          <TabStrip tabs={DESKTOPS} initial="triggers" />
          <div className="h-px shrink-0 bg-[#6d6d70]" />
          <div className="flex min-h-0 flex-1">
            <div className="relative min-w-0 flex-1 overflow-hidden bg-[#a9a9a9]">
              <div className="absolute top-0 left-0 h-[216px] w-5 border-b-[8px] border-[#c9dcee] bg-white" />
              <EventWindows />
              <MapWindow />
              <GaugeWindow />
              <GraphWindow />
              <ScopeWindow />
            </div>
            <div className="w-[6px] shrink-0 bg-[#f3f3f3]" />
          </div>
          <div className="h-[18px] shrink-0 pt-2 pl-9">
            <div className="h-[2px] w-[1211px] bg-[#858585]" />
          </div>
        </main>
      </div>

      <footer className="flex h-[18px] shrink-0 items-stretch gap-1 overflow-hidden border-t border-b border-[#9c9c9c] bg-[#d0d0d0] text-[11px] leading-4 font-bold whitespace-nowrap">
        <div className="flex w-[86px] shrink-0 justify-end overflow-hidden bg-[#ff0000] pr-2 text-white">DISCONNECTED</div>
        {STATUS.map(([label, width, tone]) => (
          <div key={label} className={`shrink-0 overflow-hidden pl-px ${width} ${tone}`}>{label}</div>
        ))}
      </footer>
      <div className="h-[6px] shrink-0 bg-[#1c2428] pt-[3px] pl-[1311px]">
        <div className="h-[3px] w-10 rounded-t bg-[#8a3f48]" />
      </div>
    </div>
  );
}
